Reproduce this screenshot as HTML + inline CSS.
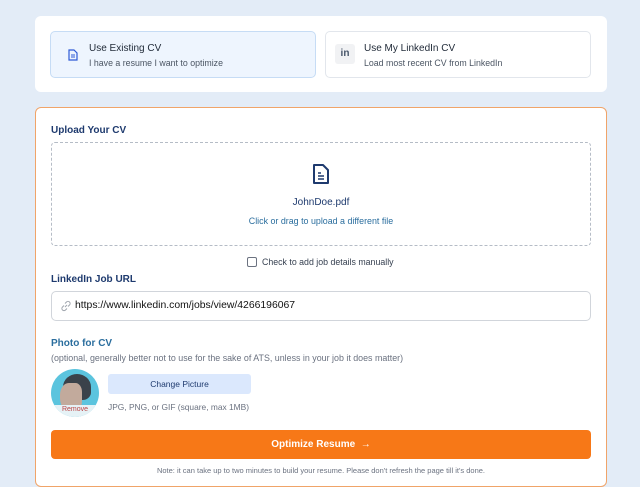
<!DOCTYPE html>
<html><head><style>
*{box-sizing:border-box;margin:0;padding:0}
body{width:640px;height:469px;overflow:hidden;background:#e3ecf7;font-family:"Liberation Sans",sans-serif;position:relative}
.card1{position:absolute;left:35px;top:16px;width:572px;height:76px;background:#fff;border-radius:6px}
.opt{position:absolute;top:15px;height:47px;border-radius:5px;border:1px solid #e2e6ec;background:#fff}
.opt .t{position:absolute;left:38px;top:11px;font-size:10px;color:#1f2937}
.opt .s{position:absolute;left:38px;top:26px;font-size:8.8px;color:#4b5563}
.card2{position:absolute;left:35px;top:107px;width:572px;height:380px;background:#fff;border:1.5px solid #f0a469;border-radius:6px}
.lbl{position:absolute;font-size:10px;font-weight:bold;color:#1e3a6e}
.drop{position:absolute;left:15px;top:34px;width:540px;height:104px;border:1px dashed #b5bcc6;border-radius:4px}
.url{position:absolute;left:15px;top:183px;width:540px;height:30px;border:1px solid #d1d5db;border-radius:5px}
.btn{position:absolute;left:15px;top:322px;width:540px;height:29px;background:#f77817;border-radius:4px;color:#fff;font-size:10px;font-weight:bold;text-align:center;line-height:29px}
</style></head><body>
<div class="card1">
 <div class="opt" style="left:15px;width:266px;background:#eef5fe;border-color:#c6dcf5">
  <svg style="position:absolute;left:17px;top:17px" width="10" height="12" viewBox="0 0 10 12"><path d="M1 1h5l3 3v7H1z" fill="none" stroke="#2e5bd6" stroke-width="1.2"/><path d="M3 6h4M3 8h4" stroke="#2e5bd6"/></svg>
  <div class="t">Use Existing CV</div><div class="s">I have a resume I want to optimize</div></div>
 <div class="opt" style="left:290px;width:266px">
  <div style="position:absolute;left:9px;top:12px;width:20px;height:20px;background:#f1f2f4;border-radius:3px;font-size:10px;font-weight:bold;color:#475569;text-align:center;line-height:20px">in</div>
  <div class="t">Use My LinkedIn CV</div><div class="s">Load most recent CV from LinkedIn</div></div>
</div>
<div class="card2">
 <div class="lbl" style="left:15px;top:17px">Upload Your CV</div>
 <div class="drop">
  <svg style="position:absolute;left:259px;top:20px" width="20" height="22" viewBox="0 0 20 22"><path d="M3 2h9l5 5v13H3z" fill="none" stroke="#1e3a6e" stroke-width="2" stroke-linejoin="round"/><path d="M7 10h3M7 13h6M7 16h6" stroke="#1e3a6e" stroke-width="1.6"/></svg>
  <div style="position:absolute;left:0;right:0;top:54px;text-align:center;font-size:10px;color:#1e3a6e">JohnDoe.pdf</div>
  <div style="position:absolute;left:0;right:0;top:73px;text-align:center;font-size:8.9px;color:#2b6e9e">Click or drag to upload a different file</div>
 </div>
 <div style="position:absolute;left:211px;top:149px;width:10px;height:10px;border:1px solid #6b7280;border-radius:2px"></div>
 <div style="position:absolute;left:226px;top:149px;font-size:8.8px;color:#374151">Check to add job details manually</div>
 <div class="lbl" style="left:15px;top:166px">LinkedIn Job URL</div>
 <div class="url"><svg style="position:absolute;left:8px;top:8px" width="12" height="12" viewBox="0 0 12 12"><path d="M5 7l2-2M4 5.5L2.5 7a2 2 0 003 3L7 8.5M8 6.5L9.5 5a2 2 0 00-3-3L5 3.5" fill="none" stroke="#a0a6ae" stroke-width="1"/></svg><span style="position:absolute;left:23px;top:8px;font-size:10.4px;color:#111">https://www.linkedin.com/jobs/view/4266196067</span></div>
 <div class="lbl" style="left:15px;top:230px;color:#2b6e9e">Photo for CV</div>
 <div style="position:absolute;left:15px;top:245px;font-size:8.9px;color:#6b7280">(optional, generally better not to use for the sake of ATS, unless in your job it does matter)</div>
 <div style="position:absolute;left:15px;top:261px;width:48px;height:48px;border-radius:50%;background:#5bc4de;overflow:hidden">
  <div style="position:absolute;left:12px;top:5px;width:28px;height:26px;border-radius:50% 50% 30% 40%;background:#3a424a"></div>
  <div style="position:absolute;left:9px;top:14px;width:22px;height:30px;border-radius:40% 30% 40% 50%;background:#c2aa9c"></div>
  <div style="position:absolute;left:0;top:36px;width:48px;height:12px;background:#e6f2f6"></div>
  <div style="position:absolute;bottom:4px;width:100%;text-align:center;font-size:7px;color:#b44">Remove</div></div>
 <div style="position:absolute;left:72px;top:266px;width:143px;height:20px;background:#dbe8fd;border-radius:3px;font-size:8.5px;color:#1e3a6e;text-align:center;line-height:20px">Change Picture</div>
 <div style="position:absolute;left:72px;top:294px;font-size:8.4px;color:#6b7280">JPG, PNG, or GIF (square, max 1MB)</div>
 <div class="btn">Optimize Resume &nbsp;→</div>
 <div style="position:absolute;left:0;right:0;top:358px;text-align:center;font-size:7.5px;color:#6b7280">Note: it can take up to two minutes to build your resume. Please don't refresh the page till it's done.</div>
</div>
</body></html>
